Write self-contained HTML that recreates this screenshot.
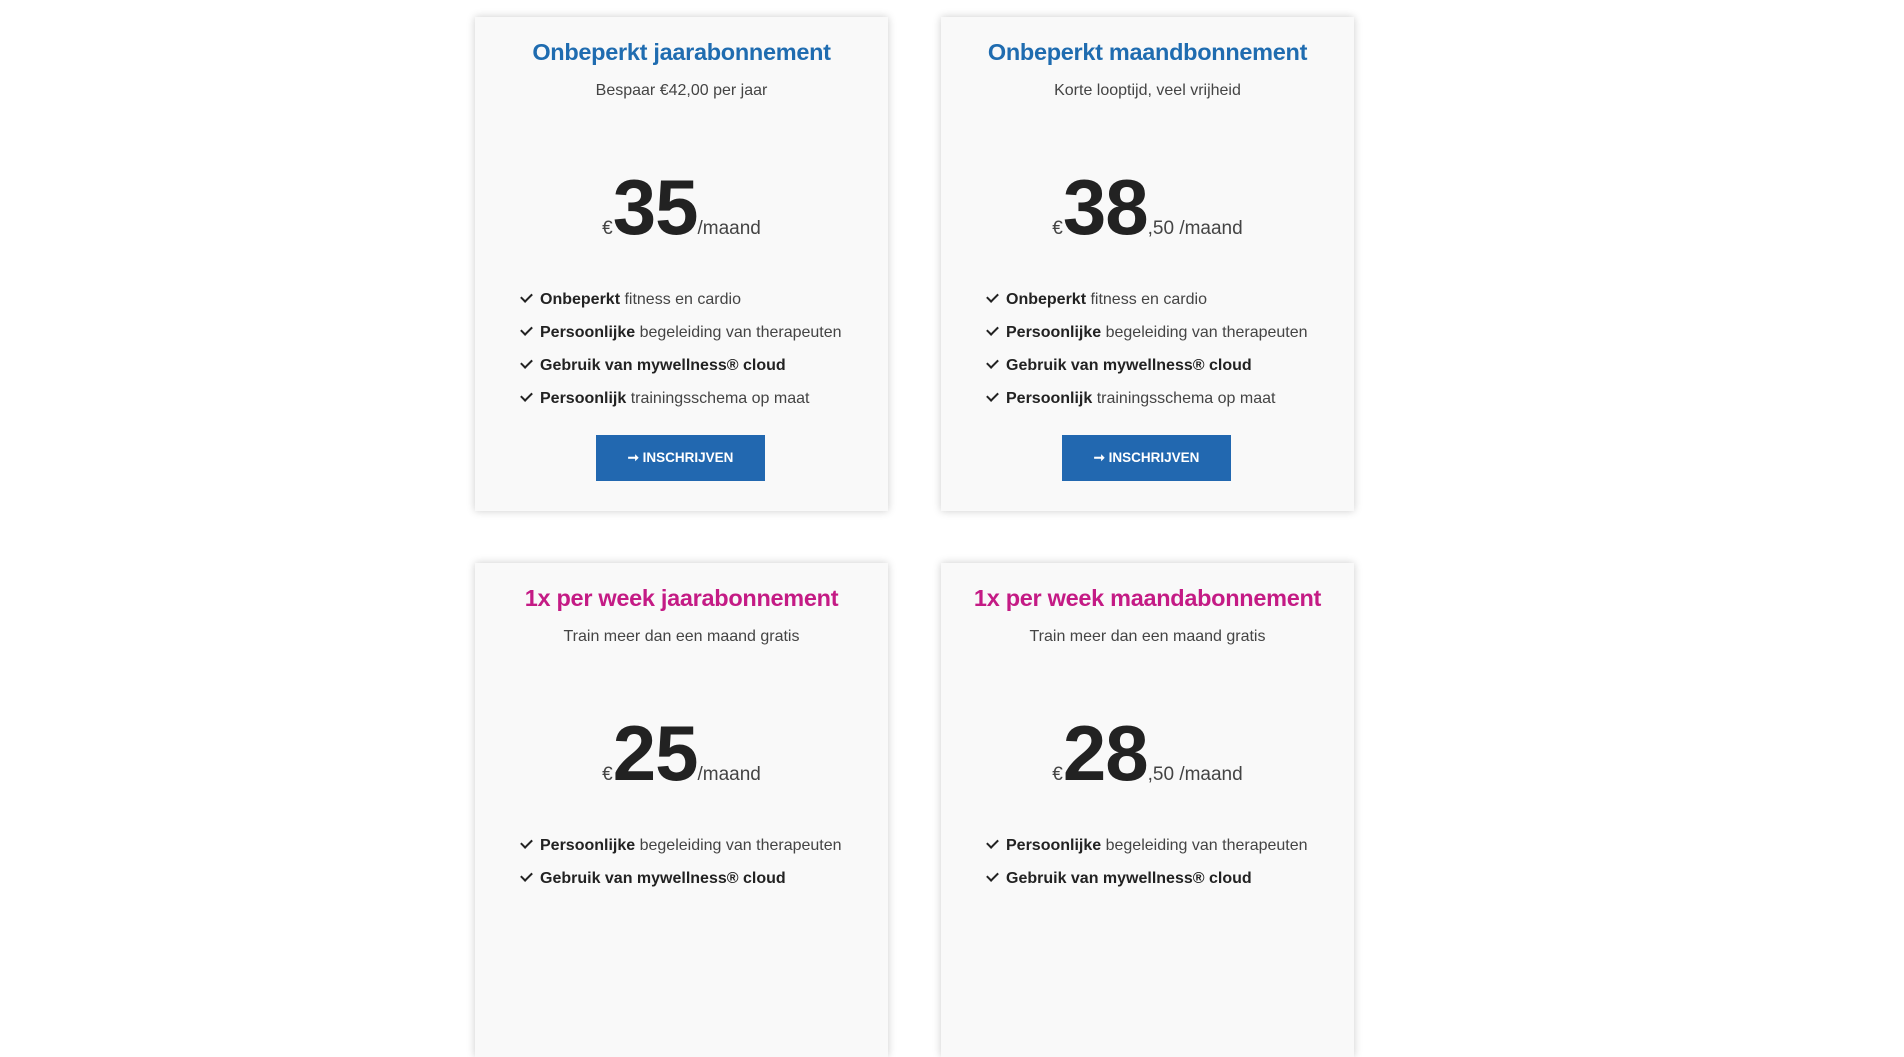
<!DOCTYPE html>
<html><head><meta charset="utf-8"><style>
body{margin:0;width:1904px;height:904px;background:#fff;overflow:hidden;font-family:"Liberation Sans",sans-serif;color:#333}
.card{position:absolute;width:413px;height:494px;background:#f9f9f9;box-shadow:0 0 8px rgba(0,0,0,.2)}
.t{position:absolute;top:22px;left:0;right:0;text-align:center;font-weight:bold;font-size:23.5px;line-height:26px;letter-spacing:-0.3px}
.s{position:absolute;top:64px;left:0;right:0;text-align:center;font-size:16px;line-height:20px;color:#444}
.p{position:absolute;top:150px;left:0;right:0;text-align:center;white-space:nowrap;line-height:80px;height:80px}
.p .c{font-size:19px;color:#444}
.p .n{font-size:78px;font-weight:bold;color:#222;letter-spacing:-1px}
.p .m{font-size:19px;color:#444}
ul{position:absolute;top:272px;left:44px;margin:0;padding:0;list-style:none;font-size:16px;color:#444;white-space:nowrap}
li{height:33px;line-height:22px}
li b{color:#222}
li:before{content:"";display:inline-block;width:9px;height:5px;border-left:2.5px solid #222;border-bottom:2.5px solid #222;transform:rotate(-45deg);margin:0 8px 4px 2px}
.btn{position:absolute;top:418px;left:121px;width:169px;height:46px;background:#2268b0;color:#fff;font-weight:bold;font-size:13.5px;text-align:center;line-height:46px}
.blue{color:#1f6cb0}.mag{color:#c41b85}
</style></head><body>
<div class="card" style="left:475px;top:17px">
<div class="t blue">Onbeperkt jaarabonnement</div>
<div class="s">Bespaar €42,00 per jaar</div>
<div class="p"><span class="c">€</span><span class="n">35</span><span class="m">/maand</span></div>
<ul><li><b>Onbeperkt</b> fitness en cardio</li><li><b>Persoonlijke</b> begeleiding van therapeuten</li><li><b>Gebruik van mywellness® cloud</b></li><li><b>Persoonlijk</b> trainingsschema op maat</li></ul>
<div class="btn">➞ INSCHRIJVEN</div></div>
<div class="card" style="left:941px;top:17px">
<div class="t blue">Onbeperkt maandbonnement</div>
<div class="s">Korte looptijd, veel vrijheid</div>
<div class="p"><span class="c">€</span><span class="n">38</span><span class="m">,50 /maand</span></div>
<ul><li><b>Onbeperkt</b> fitness en cardio</li><li><b>Persoonlijke</b> begeleiding van therapeuten</li><li><b>Gebruik van mywellness® cloud</b></li><li><b>Persoonlijk</b> trainingsschema op maat</li></ul>
<div class="btn">➞ INSCHRIJVEN</div></div>
<div class="card" style="left:475px;top:563px">
<div class="t mag">1x per week jaarabonnement</div>
<div class="s">Train meer dan een maand gratis</div>
<div class="p"><span class="c">€</span><span class="n">25</span><span class="m">/maand</span></div>
<ul><li><b>Persoonlijke</b> begeleiding van therapeuten</li><li><b>Gebruik van mywellness® cloud</b></li></ul></div>
<div class="card" style="left:941px;top:563px">
<div class="t mag">1x per week maandabonnement</div>
<div class="s">Train meer dan een maand gratis</div>
<div class="p"><span class="c">€</span><span class="n">28</span><span class="m">,50 /maand</span></div>
<ul><li><b>Persoonlijke</b> begeleiding van therapeuten</li><li><b>Gebruik van mywellness® cloud</b></li></ul></div>
</body></html>
